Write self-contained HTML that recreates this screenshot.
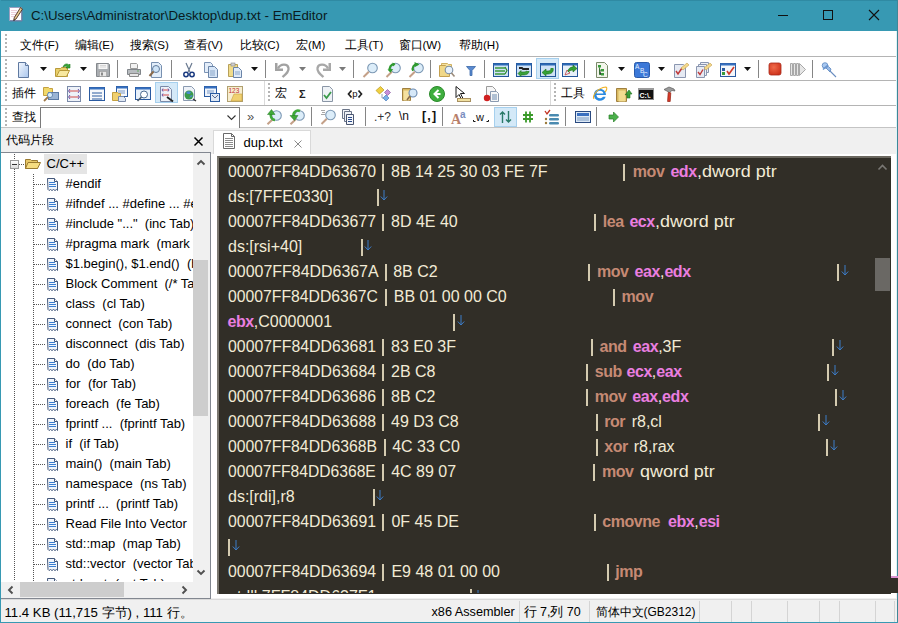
<!DOCTYPE html><html><head><meta charset="utf-8"><style>
*{margin:0;padding:0;box-sizing:border-box}
html,body{width:898px;height:623px;overflow:hidden;background:#f0f0f0;font-family:"Liberation Sans",sans-serif;color:#000}
.a{position:absolute}
.t{position:absolute;white-space:pre;line-height:1}
svg{position:absolute;overflow:visible}
.e{position:absolute;white-space:pre;line-height:1;font-size:16px;color:#f2ebd6}
.m{font-weight:bold;color:#c68a74;letter-spacing:-0.45px}
.r{font-weight:bold;color:#ea7ee0;letter-spacing:-0.45px}
.p{color:#cdb88e}
.w{color:#3f8fe8}
.tr{position:absolute;white-space:pre;line-height:1;font-size:13px;color:#000}
</style></head><body>
<div class="a" style="left:0px;top:0px;width:898px;height:31px;background:#3799b3;"></div>
<div class="a" style="left:0px;top:0px;width:898px;height:1px;background:#2f8aa3;"></div>
<svg style="left:8px;top:6px" width="16" height="16" viewBox="0 0 16 16"><path d="M1.5 1.5h12v13h-12z" fill="#fdfdff" stroke="#9aa0c0"/><path d="M14 3v12h-12" fill="none" stroke="#6a7aa0" stroke-width="1"/><path d="M3 4.5h6M3 6.5h6M3 8.5h5M3 10.5h4" stroke="#e0b0c0" stroke-width="0.6"/><path d="M12.5 1.5l2 1.5-6.5 10-2.2 1.2.4-2.4z" fill="#e8c890" stroke="#4a3020" stroke-width="0.9"/><path d="M6 13.5l-.6 1.4 1.3-.7z" fill="#000"/></svg>
<div class="t" style="left:31px;top:9px;font-size:13.3px;color:#0a1a20;">C:\Users\Administrator\Desktop\dup.txt - EmEditor</div>
<div class="a" style="left:778px;top:15px;width:10px;height:1px;background:#111;"></div>
<div class="a" style="left:823px;top:10px;width:10px;height:10px;background:transparent;border:1px solid #111"></div>
<svg style="left:869px;top:10px" width="10" height="10" viewBox="0 0 10 10"><path d="M0 0L10 10M10 0L0 10" stroke="#111" stroke-width="1.1"/></svg>
<div class="a" style="left:1px;top:31px;width:895px;height:97px;background:#ffffff;"></div>
<div class="t" style="left:20px;top:39px;font-size:11.6px;color:#000;">文件(F)</div>
<div class="t" style="left:74.5px;top:39px;font-size:11.6px;color:#000;">编辑(E)</div>
<div class="t" style="left:129.5px;top:39px;font-size:11.6px;color:#000;">搜索(S)</div>
<div class="t" style="left:183.5px;top:39px;font-size:11.6px;color:#000;">查看(V)</div>
<div class="t" style="left:239.5px;top:39px;font-size:11.6px;color:#000;">比较(C)</div>
<div class="t" style="left:296px;top:39px;font-size:11.6px;color:#000;">宏(M)</div>
<div class="t" style="left:344.5px;top:39px;font-size:11.6px;color:#000;">工具(T)</div>
<div class="t" style="left:398.5px;top:39px;font-size:11.6px;color:#000;">窗口(W)</div>
<div class="t" style="left:459px;top:39px;font-size:11.6px;color:#000;">帮助(H)</div>
<div class="a" style="left:1px;top:56px;width:896px;height:1px;background:#b4b4b4;"></div>
<div class="a" style="left:1px;top:80px;width:896px;height:1px;background:#b4b4b4;"></div>
<div class="a" style="left:1px;top:105px;width:896px;height:1px;background:#b4b4b4;"></div>
<div class="a" style="left:1px;top:127px;width:896px;height:1px;background:#c4c4c4;"></div>
<div class="a" style="left:5px;top:34px;width:2px;height:2px;background:#b4b4b4;"></div>
<div class="a" style="left:5px;top:38px;width:2px;height:2px;background:#b4b4b4;"></div>
<div class="a" style="left:5px;top:42px;width:2px;height:2px;background:#b4b4b4;"></div>
<div class="a" style="left:5px;top:46px;width:2px;height:2px;background:#b4b4b4;"></div>
<div class="a" style="left:5px;top:50px;width:2px;height:2px;background:#b4b4b4;"></div>
<div class="a" style="left:5px;top:59px;width:2px;height:2px;background:#b4b4b4;"></div>
<div class="a" style="left:5px;top:63px;width:2px;height:2px;background:#b4b4b4;"></div>
<div class="a" style="left:5px;top:67px;width:2px;height:2px;background:#b4b4b4;"></div>
<div class="a" style="left:5px;top:71px;width:2px;height:2px;background:#b4b4b4;"></div>
<div class="a" style="left:5px;top:75px;width:2px;height:2px;background:#b4b4b4;"></div>
<svg style="left:16px;top:62px" width="16" height="16" viewBox="0 0 16 16"><defs><linearGradient id="gn" x1="0" y1="0" x2="1" y2="1"><stop offset="0" stop-color="#f4f8fd"/><stop offset="1" stop-color="#a9c6ee"/></linearGradient></defs><path d="M2.5 0.5h7l3 3v12h-10z" fill="url(#gn)" stroke="#5f79a0"/><path d="M9.5 0.5v3h3" fill="#dce8f7" stroke="#5f79a0"/></svg>
<svg style="left:40px;top:67px" width="7" height="4" viewBox="0 0 7 4"><path d="M0 0h7l-3.5 4z" fill="#111"/></svg>
<svg style="left:55px;top:62px" width="16" height="16" viewBox="0 0 16 16"><path d="M0.5 6.5h5l1-1h6v9h-12z" fill="#e9cf6a" stroke="#b89a3a"/><path d="M1.5 14.5l3-6h10l-3 6z" fill="#f8e9a0" stroke="#b89a3a"/><path d="M8 5c1-3 4-4 6-2l1-1v4h-4l1.3-1.3c-1.5-1-3-0.5-4.3 0.3z" fill="#3aa63a" stroke="#1f7a1f" stroke-width="0.6"/></svg>
<svg style="left:80px;top:67px" width="7" height="4" viewBox="0 0 7 4"><path d="M0 0h7l-3.5 4z" fill="#111"/></svg>
<svg style="left:95px;top:62px" width="16" height="16" viewBox="0 0 16 16"><path d="M1.5 1.5h12l1 1v12h-13z" fill="#a9adb1" stroke="#85898d"/><rect x="3.5" y="2" width="9" height="5" fill="#f6f6f6"/><path d="M5 3.5h6M5 5h6" stroke="#c8c8c8" stroke-width="0.7"/><rect x="4.5" y="9.5" width="7" height="5" fill="#e8e8e8" stroke="#9a9a9a" stroke-width="0.6"/><rect x="6" y="10.5" width="2" height="3" fill="#8a8a8a"/></svg>
<div class="a" style="left:117px;top:60px;width:1px;height:18px;background:#858585;"></div>
<svg style="left:126px;top:62px" width="16" height="16" viewBox="0 0 16 16"><path d="M4.5 1.5h6l1 1v4h-7z" fill="#f2f2f2" stroke="#9a9a9a"/><path d="M1.5 7.5h13v5h-13z" fill="#b8bcc0" stroke="#80858a"/><path d="M3.5 11.5h9v3h-9z" fill="#e8e8e8" stroke="#8a8a8a"/><rect x="11" y="8.5" width="2" height="1" fill="#6a6"/></svg>
<svg style="left:148px;top:62px" width="16" height="16" viewBox="0 0 16 16"><path d="M3.5 0.5h7l3 3v12h-10z" fill="#e2edf9" stroke="#7890b0"/><circle cx="8" cy="7" r="3.5" fill="#cfe4f7" stroke="#607a9a"/><path d="M5.5 9.5l-4 4.5" stroke="#8a6a4a" stroke-width="2"/></svg>
<div class="a" style="left:171px;top:60px;width:1px;height:18px;background:#858585;"></div>
<svg style="left:181px;top:62px" width="16" height="16" viewBox="0 0 16 16"><path d="M5 1l4 9M11 1l-4 9" stroke="#6a7a90" stroke-width="1.2"/><circle cx="5" cy="12.5" r="2.2" fill="none" stroke="#1a3a80" stroke-width="1.5"/><circle cx="11" cy="12.5" r="2.2" fill="none" stroke="#1a3a80" stroke-width="1.5"/></svg>
<svg style="left:203px;top:62px" width="16" height="16" viewBox="0 0 16 16"><path d="M1.5 0.5h6l2 2v8h-8z" fill="#e3edf9" stroke="#7a92b4"/><path d="M5.5 4.5h6l3 3v8h-9z" fill="#d6e5f7" stroke="#6a84a8"/><path d="M7 9h5M7 11h5M7 13h5" stroke="#8aa6c8"/></svg>
<svg style="left:227px;top:62px" width="16" height="16" viewBox="0 0 16 16"><path d="M1.5 2.5h9v12h-9z" fill="#f1dc8a" stroke="#b7a05a"/><rect x="4" y="1" width="4" height="3" fill="#cfcfcf" stroke="#888" stroke-width="0.6"/><path d="M6.5 5.5h5l3 3v7h-8z" fill="#e0ebf8" stroke="#6a84a8"/><path d="M8 10h5M8 12h5" stroke="#8aa6c8"/></svg>
<svg style="left:251px;top:67px" width="7" height="4" viewBox="0 0 7 4"><path d="M0 0h7l-3.5 4z" fill="#111"/></svg>
<div class="a" style="left:265px;top:60px;width:1px;height:18px;background:#858585;"></div>
<svg style="left:274px;top:62px" width="16" height="16" viewBox="0 0 16 16"><path d="M4 6.5C6.5 1.5 13.5 1.5 14.5 6 15.2 9.5 12 12 8.5 15" fill="none" stroke="#a2a2a2" stroke-width="2.3"/><path d="M1 1h2.5v5.5H9V9H1z" fill="#a2a2a2"/></svg>
<svg style="left:299px;top:67px" width="7" height="4" viewBox="0 0 7 4"><path d="M0 0h7l-3.5 4z" fill="#7a7a7a"/></svg>
<svg style="left:316px;top:62px" width="16" height="16" viewBox="0 0 16 16"><path d="M12 6.5C9.5 1.5 2.5 1.5 1.5 6 .8 9.5 4 12 7.5 15" fill="none" stroke="#a8a8a8" stroke-width="2.3"/><path d="M15 1h-2.5v5.5H7V9h8z" fill="#a8a8a8"/></svg>
<svg style="left:339px;top:67px" width="7" height="4" viewBox="0 0 7 4"><path d="M0 0h7l-3.5 4z" fill="#7a7a7a"/></svg>
<div class="a" style="left:353px;top:60px;width:1px;height:18px;background:#858585;"></div>
<svg style="left:362px;top:62px" width="16" height="16" viewBox="0 0 16 16"><circle cx="10.5" cy="6" r="4.8" fill="#dcedf9" stroke="#7c98b4" stroke-width="1.1"/><path d="M6.8 9.8L1.5 15" stroke="#c4a088" stroke-width="2"/></svg>
<svg style="left:385px;top:62px" width="16" height="16" viewBox="0 0 16 16"><circle cx="10.5" cy="6" r="4.8" fill="#dcedf9" stroke="#7c98b4" stroke-width="1.1"/><path d="M6.8 9.8L1.5 15" stroke="#c4a088" stroke-width="2"/><path d="M9.5 2.2A4.5 4.5 0 0 0 5.2 8.8" fill="none" stroke="#2f9a2f" stroke-width="2.2"/><path d="M2.5 7.5l3 3.2 2.7-3.7z" fill="#2f9a2f"/><path d="M7.5 0.5l3 1.8-2.6 2.2z" fill="#2f9a2f"/></svg>
<svg style="left:408px;top:62px" width="16" height="16" viewBox="0 0 16 16"><circle cx="10.5" cy="6" r="4.8" fill="#dcedf9" stroke="#7c98b4" stroke-width="1.1"/><path d="M6.8 9.8L1.5 15" stroke="#c4a088" stroke-width="2"/><path d="M9.5 2.2A4.5 4.5 0 0 0 5.2 8.8" fill="none" stroke="#2f9a2f" stroke-width="2.2"/><path d="M6.5 0l5 2.5-4.5 2.5z" fill="#2f9a2f"/></svg>
<div class="a" style="left:430px;top:60px;width:1px;height:18px;background:#858585;"></div>
<svg style="left:439px;top:62px" width="16" height="16" viewBox="0 0 16 16"><path d="M2.5 1.5h6l1 1h3v9h-10z" fill="#f4e2a0" stroke="#d0b060"/><path d="M0.5 3.5h6l1 1h3v10h-10z" fill="#f0d888" stroke="#c4a050"/><circle cx="10" cy="8" r="3.8" fill="#e6f1fb" stroke="#7a8ea6" stroke-width="1.1"/><path d="M12.5 11l3 3.5" stroke="#9a8a7a" stroke-width="1.6"/></svg>
<svg style="left:463px;top:62px" width="16" height="16" viewBox="0 0 16 16"><path d="M3.5 4.5h9l-3.5 4v5h-2v-5z" fill="#5a8ad0" stroke="#3a68a8" stroke-width="0.8"/></svg>
<div class="a" style="left:484px;top:60px;width:1px;height:18px;background:#858585;"></div>
<svg style="left:493px;top:62px" width="16" height="16" viewBox="0 0 16 16"><rect x="0.5" y="1.5" width="15" height="13" fill="#cfe2f6" stroke="#22559a"/><rect x="0.5" y="1.5" width="15" height="2" fill="#2d6ab5"/><path d="M2 6h10M2 9h10M2 12h10" stroke="#3e9a3e" stroke-width="1.6"/><path d="M12 5l2 3.5-2 3.5" fill="none" stroke="#2a8a2a" stroke-width="1.2"/></svg>
<svg style="left:516px;top:62px" width="16" height="16" viewBox="0 0 16 16"><rect x="0.5" y="1.5" width="15" height="13" fill="#cfe2f6" stroke="#22559a"/><rect x="0.5" y="1.5" width="15" height="2" fill="#2d6ab5"/><path d="M3 6h3l1 1h6" stroke="#222" stroke-width="1.8"/><path d="M13 9c0 3-3 4-6 4l-2 0 0 1.5-3-3 3-3v1.5h2c2 0 3-.5 4-1" fill="#3aa03a" stroke="#1d701d" stroke-width="0.6"/></svg>
<div class="a" style="left:536px;top:58px;width:23px;height:21px;background:#d4e9f8;border:1px solid #a6d0ee"></div>
<svg style="left:540px;top:62px" width="16" height="16" viewBox="0 0 16 16"><rect x="0.5" y="1.5" width="15" height="13" fill="#cfe2f6" stroke="#22559a"/><rect x="0.5" y="1.5" width="15" height="2" fill="#2d6ab5"/><path d="M13 6c1 3-1 6-5 6h-2v2l-4-3.5 4-3.5v2h2c2 0 3-1 3-3" fill="#35a035" stroke="#1d701d" stroke-width="0.6"/></svg>
<svg style="left:562px;top:62px" width="16" height="16" viewBox="0 0 16 16"><rect x="0.5" y="1.5" width="15" height="13" fill="#e6eff9" stroke="#22559a"/><rect x="0.5" y="1.5" width="15" height="2" fill="#2d6ab5"/><path d="M3 13l2-5 3 3z" fill="none" stroke="#c04040" stroke-width="0.8"/><path d="M6 10c0-3 2-5 5-5v-2l4 3.5-4 3.5v-2c-2 0-3.5 1-5 2z" fill="#35a035" stroke="#1d701d" stroke-width="0.6"/></svg>
<div class="a" style="left:584px;top:60px;width:1px;height:18px;background:#858585;"></div>
<svg style="left:595px;top:62px" width="16" height="16" viewBox="0 0 16 16"><path d="M1.5 0.5h8l3 3v12h-11z" fill="#f2f5ea" stroke="#7a8a6a"/><rect x="3" y="3" width="3" height="2.5" fill="#3a9a3a"/><rect x="6" y="7" width="3" height="2.5" fill="#3a9a3a"/><rect x="6" y="11" width="3" height="2.5" fill="#3a9a3a"/><path d="M4.5 5.5v7h1.5M4.5 8.2h1.5" stroke="#2a6a2a" stroke-width="0.8"/></svg>
<svg style="left:618px;top:67px" width="7" height="4" viewBox="0 0 7 4"><path d="M0 0h7l-3.5 4z" fill="#111"/></svg>
<svg style="left:634px;top:62px" width="16" height="16" viewBox="0 0 16 16"><rect x="0.5" y="0.5" width="15" height="15" rx="2" fill="#3b78d8" stroke="#2a5aaa"/><text x="1" y="7" font-size="6.5" fill="#e8f0ff" font-family="Liberation Sans">A</text><text x="6" y="11" font-size="6.5" fill="#e8f0ff" font-family="Liberation Sans">B</text><text x="9" y="15" font-size="6.5" fill="#e8f0ff" font-family="Liberation Sans">C</text></svg>
<svg style="left:658px;top:67px" width="7" height="4" viewBox="0 0 7 4"><path d="M0 0h7l-3.5 4z" fill="#111"/></svg>
<svg style="left:673px;top:62px" width="16" height="16" viewBox="0 0 16 16"><path d="M1.5 2.5h9l2 2v11h-11z" fill="#e6eaf3" stroke="#8a96b0"/><path d="M3 9l2 3 4-6" fill="none" stroke="#c03a3a" stroke-width="1.5"/><path d="M8 6l6-5 2 2-6 5z" fill="#f4d98a" stroke="#c4a050" stroke-width="0.6"/></svg>
<svg style="left:696px;top:62px" width="16" height="16" viewBox="0 0 16 16"><path d="M4.5 0.5h8v10h-8z" fill="#eef0f6" stroke="#8a96b0"/><path d="M2.5 2.5h8v11h-8z" fill="#eef0f6" stroke="#8a96b0"/><path d="M0.5 4.5h8v11h-8z" fill="#e6eaf3" stroke="#8a96b0"/><path d="M2 10l2 2.5 3-5" fill="none" stroke="#c03a3a" stroke-width="1.4"/><path d="M8 6l6-5 2 2-6 5z" fill="#f4d98a" stroke="#c4a050" stroke-width="0.6"/></svg>
<svg style="left:720px;top:62px" width="16" height="16" viewBox="0 0 16 16"><rect x="0.5" y="1.5" width="15" height="13" fill="#f4f7fb" stroke="#2a5aa0"/><rect x="0.5" y="1.5" width="15" height="2" fill="#3670c0"/><rect x="2" y="6" width="3" height="3" fill="#2a5aa0"/><rect x="2" y="10" width="3" height="3" fill="#3a9a3a"/><path d="M7 9l2 3 5-7" fill="none" stroke="#d03a2a" stroke-width="1.6"/></svg>
<svg style="left:744px;top:67px" width="7" height="4" viewBox="0 0 7 4"><path d="M0 0h7l-3.5 4z" fill="#111"/></svg>
<div class="a" style="left:758px;top:60px;width:1px;height:18px;background:#858585;"></div>
<svg style="left:768px;top:62px" width="16" height="16" viewBox="0 0 16 16"><defs><radialGradient id="gs" cx="0.4" cy="0.35" r="0.8"><stop offset="0" stop-color="#f06a4a"/><stop offset="1" stop-color="#c82a14"/></radialGradient></defs><rect x="1" y="1" width="12" height="12" rx="2" fill="url(#gs)" stroke="#a8281a" stroke-width="0.8"/></svg>
<svg style="left:790px;top:62px" width="16" height="16" viewBox="0 0 16 16"><path d="M0.5 1.5h2v12h-2zM3.5 1.5h2v12h-2zM6.5 1.5h2v12h-2z" fill="#e6e6e6" stroke="#a8a8a8"/><path d="M9.5 1.5l6 6-6 6z" fill="#e6e6e6" stroke="#a8a8a8"/></svg>
<div class="a" style="left:812px;top:60px;width:1px;height:18px;background:#858585;"></div>
<svg style="left:821px;top:62px" width="16" height="16" viewBox="0 0 16 16"><circle cx="4" cy="3.5" r="2.8" fill="#a8c8f0" stroke="#5a86c0" stroke-width="0.8"/><path d="M4.5 5.5l3-1 2.5 2.5-1 3z" fill="#9abce8" stroke="#5a86c0" stroke-width="0.8"/><path d="M2 7.5l5-4.5" stroke="#6a96d0" stroke-width="1.6"/><path d="M8.5 8.5l6.5 6.5" stroke="#6a8ec0" stroke-width="1.1"/></svg>
<div class="a" style="left:5px;top:83px;width:2px;height:2px;background:#b4b4b4;"></div>
<div class="a" style="left:5px;top:87px;width:2px;height:2px;background:#b4b4b4;"></div>
<div class="a" style="left:5px;top:91px;width:2px;height:2px;background:#b4b4b4;"></div>
<div class="a" style="left:5px;top:95px;width:2px;height:2px;background:#b4b4b4;"></div>
<div class="a" style="left:5px;top:99px;width:2px;height:2px;background:#b4b4b4;"></div>
<div class="t" style="left:12px;top:87px;font-size:12px;color:#000;">插件</div>
<svg style="left:43px;top:86px" width="16" height="16" viewBox="0 0 16 16"><path d="M0.5 1.5h5l1 1h3v7h-9z" fill="#f0d86a" stroke="#c4a040"/><rect x="5.5" y="6.5" width="10" height="7" fill="#9ab4d4" stroke="#5a7aa4"/><circle cx="7" cy="9" r="2.6" fill="#d6ecfa" stroke="#6a8ab0"/><path d="M5 11l-4 4" stroke="#a07a4a" stroke-width="1.8"/></svg>
<svg style="left:67px;top:86px" width="16" height="16" viewBox="0 0 16 16"><rect x="0.5" y="0.5" width="13" height="15" fill="#eef2f8" stroke="#7a8aa8"/><path d="M2 5h10M2 11h10" stroke="#d04a4a" stroke-width="1.2"/><path d="M3 3l-1.5 2 1.5 2M11 3l1.5 2-1.5 2M3 9l-1.5 2 1.5 2M11 9l1.5 2-1.5 2" fill="none" stroke="#6a5ab0" stroke-width="1"/></svg>
<svg style="left:89px;top:86px" width="16" height="16" viewBox="0 0 16 16"><rect x="0.5" y="1.5" width="15" height="13" fill="#f6f8fb" stroke="#2a5aa0"/><rect x="0.5" y="1.5" width="15" height="2" fill="#3670c0"/><path d="M3 7h10M3 10h10M3 13h10" stroke="#2a5aa0" stroke-width="1.2"/></svg>
<svg style="left:112px;top:86px" width="16" height="16" viewBox="0 0 16 16"><rect x="4.5" y="0.5" width="11" height="10" fill="#f4f7fb" stroke="#2a5aa0"/><rect x="4.5" y="0.5" width="11" height="2" fill="#3670c0"/><path d="M6 5h7M6 7h7" stroke="#7a9ac8"/><path d="M0.5 6.5h5l1 1h2v7h-8z" fill="#f0d070" stroke="#c4a040"/><path d="M6.5 15.5l0-5h5l2 2v3z" fill="#dfe8f4" stroke="#7a8aa8"/></svg>
<svg style="left:135px;top:86px" width="16" height="16" viewBox="0 0 16 16"><rect x="0.5" y="1.5" width="15" height="12" fill="#e8f1fb" stroke="#2a5aa0"/><rect x="0.5" y="1.5" width="15" height="2" fill="#3670c0"/><circle cx="9" cy="8.5" r="3.5" fill="#fff" stroke="#4a6a90"/><path d="M6.5 11l-4 4" stroke="#4a5a6a" stroke-width="1.6"/></svg>
<div class="a" style="left:155px;top:82px;width:23px;height:21px;background:#d4e9f8;border:1px solid #a6d0ee"></div>
<svg style="left:159px;top:86px" width="16" height="16" viewBox="0 0 16 16"><path d="M1.5 0.5h8l3 3v12h-11z" fill="#eef2f8" stroke="#7a8aa8"/><path d="M3 4h7M3 9h7" stroke="#d04a4a" stroke-width="1.2"/><path d="M4 2.5l-1 1.5 1 1.5M9 2.5l1 1.5-1 1.5M4 7.5l-1 1.5 1 1.5" fill="none" stroke="#6a5ab0"/><path d="M8 11l6 4.5" stroke="#222" stroke-width="1.8"/></svg>
<svg style="left:182px;top:86px" width="16" height="16" viewBox="0 0 16 16"><path d="M1.5 0.5h8l3 3v11h-11z" fill="#eef2f8" stroke="#8a9ab0"/><circle cx="7" cy="9" r="4.5" fill="#3a9a4a"/><path d="M4 7c1-2 3-2 5-1l-1 2-2 0z M7 12l2-3 2 1z" fill="#4a8ad0"/><path d="M11 13l3 2" stroke="#333" stroke-width="1.3"/></svg>
<svg style="left:204px;top:86px" width="16" height="16" viewBox="0 0 16 16"><rect x="0.5" y="0.5" width="12" height="10" fill="#eef3fa" stroke="#2a5aa0"/><rect x="0.5" y="0.5" width="12" height="2" fill="#3670c0"/><path d="M3 5h7M3 7h7" stroke="#7a9ac8"/><rect x="6.5" y="7.5" width="9" height="8" fill="#dfe8f4" stroke="#2a5aa0"/><path d="M8 9l3 3 3-3" fill="none" stroke="#5a6a90"/></svg>
<svg style="left:227px;top:86px" width="16" height="16" viewBox="0 0 16 16"><rect x="0.5" y="0.5" width="15" height="15" fill="#f7eed0" stroke="#b0a070"/><text x="1.5" y="7" font-size="6.5" fill="#c03030" font-family="Liberation Sans">123</text><path d="M4 15l3-7 8 0 0 7z" fill="#f0d070" stroke="#c8a040" stroke-width="0.6"/></svg>
<div class="a" style="left:264px;top:81px;width:1px;height:24px;background:#dadada;"></div>
<div class="a" style="left:268px;top:83px;width:2px;height:2px;background:#b4b4b4;"></div>
<div class="a" style="left:268px;top:87px;width:2px;height:2px;background:#b4b4b4;"></div>
<div class="a" style="left:268px;top:91px;width:2px;height:2px;background:#b4b4b4;"></div>
<div class="a" style="left:268px;top:95px;width:2px;height:2px;background:#b4b4b4;"></div>
<div class="a" style="left:268px;top:99px;width:2px;height:2px;background:#b4b4b4;"></div>
<div class="t" style="left:275px;top:87px;font-size:12px;color:#000;">宏</div>
<svg style="left:296px;top:86px" width="16" height="16" viewBox="0 0 16 16"><text x="3" y="12" font-size="11" font-weight="bold" fill="#222" font-family="Liberation Sans">Σ</text></svg>
<svg style="left:322px;top:86px" width="16" height="16" viewBox="0 0 16 16"><path d="M0.5 0.5h7l3 3v12h-10z" fill="#eef2f6" stroke="#8a96a6"/><path d="M2 9l2.5 3 4.5-6" fill="none" stroke="#3a9a4a" stroke-width="1.8"/></svg>
<svg style="left:347px;top:86px" width="16" height="16" viewBox="0 0 16 16"><path d="M4.5 4.5L1.5 8l3 3.5M11.5 4.5l3 3.5-3 3.5" fill="none" stroke="#222" stroke-width="1.7"/><text x="5.3" y="11" font-size="9.5" fill="#111" font-family="Liberation Sans">p</text></svg>
<svg style="left:375px;top:86px" width="16" height="16" viewBox="0 0 16 16"><path d="M1 4.5l4.5-4 3.5 3.5-4.5 4z" fill="#f0d040" stroke="#b89a20" stroke-width="0.7"/><path d="M9.5 6.5l3-3 3 3-3 3z" fill="#c890d8" stroke="#8a5aa0" stroke-width="0.7"/><path d="M8 12l3-3 3 3-3 3z" fill="#7ab0e6" stroke="#4a80c0" stroke-width="0.7"/><path d="M7 8v4h1" fill="none" stroke="#7a8aa0" stroke-width="0.8"/></svg>
<svg style="left:402px;top:86px" width="16" height="16" viewBox="0 0 16 16"><path d="M0.5 2.5h8v12h-8z" fill="#d8b860" stroke="#a08040"/><path d="M1.5 4.5h6v10h-6z" fill="#f4e0a0"/><circle cx="11" cy="7" r="4" fill="#d6e8f8" stroke="#6a8ab0" stroke-width="1.1"/><path d="M8 10l-3 4" stroke="#8a6a4a" stroke-width="1.6"/></svg>
<svg style="left:429px;top:86px" width="16" height="16" viewBox="0 0 16 16"><circle cx="8" cy="8" r="7.5" fill="#3fae3f" stroke="#2a8a2a"/><path d="M9.5 4l-4 4 4 4" fill="none" stroke="#fff" stroke-width="2"/><path d="M5.5 8h6" stroke="#fff" stroke-width="2"/></svg>
<svg style="left:455px;top:86px" width="16" height="16" viewBox="0 0 16 16"><path d="M1 0.5v11l3-3 2.5 5 1.5-1-2.5-5h4z" fill="#fff" stroke="#000" stroke-width="0.9"/><rect x="2.5" y="12.5" width="13" height="3" fill="#f0e0a0" stroke="#a89060"/></svg>
<svg style="left:483px;top:86px" width="16" height="16" viewBox="0 0 16 16"><path d="M3.5 0.5h6l3 3v7h-9z" fill="#f6f6f6" stroke="#9a9a9a"/><path d="M7.5 5.5h6l2 2v8h-8z" fill="#f6f6f6" stroke="#8a9ab0"/><path d="M9 9h5M9 11h5M9 13h5" stroke="#6a8ab0"/><circle cx="4" cy="12" r="3.2" fill="#d02020"/></svg>
<div class="a" style="left:550px;top:81px;width:1px;height:24px;background:#dadada;"></div>
<div class="a" style="left:554px;top:83px;width:2px;height:2px;background:#b4b4b4;"></div>
<div class="a" style="left:554px;top:87px;width:2px;height:2px;background:#b4b4b4;"></div>
<div class="a" style="left:554px;top:91px;width:2px;height:2px;background:#b4b4b4;"></div>
<div class="a" style="left:554px;top:95px;width:2px;height:2px;background:#b4b4b4;"></div>
<div class="a" style="left:554px;top:99px;width:2px;height:2px;background:#b4b4b4;"></div>
<div class="t" style="left:561px;top:87px;font-size:12px;color:#000;">工具</div>
<svg style="left:592px;top:86px" width="16" height="16" viewBox="0 0 16 16"><path d="M8 3c3.5 0 6 2.4 6 6H4.5c0 2 1.5 3.3 3.5 3.3 1.4 0 2.4-.6 3-1.5h2.7c-.9 2.5-3.2 4-5.8 4-3.4 0-6-2.6-6-6s2.7-5.8 6.1-5.8zm-3.4 4.4h6.8c-.2-1.7-1.6-2.7-3.4-2.7s-3.2 1-3.4 2.7z" fill="#2a8ae0"/><path d="M2 13c-2-3 3-11 12-12 2 1 0 4-1 5" fill="none" stroke="#f0b020" stroke-width="1.1"/></svg>
<svg style="left:616px;top:86px" width="16" height="16" viewBox="0 0 16 16"><path d="M0.5 2.5h10v13h-10z" fill="#d8b860" stroke="#a08040"/><path d="M2.5 4.5h7v11h-7z" fill="#f2dc90"/><path d="M9 9l4-5 3 4h-2v4h-3v-4z" fill="#3aa03a" stroke="#1f701f" stroke-width="0.6"/></svg>
<svg style="left:638px;top:86px" width="16" height="16" viewBox="0 0 16 16"><rect x="0" y="2" width="16" height="12" fill="#111"/><rect x="0.5" y="2.5" width="15" height="11" fill="none" stroke="#8a8a8a"/><rect x="0" y="2" width="16" height="2" fill="#9a9a9a"/><text x="1.5" y="11.5" font-size="7" font-weight="bold" fill="#fff" font-family="Liberation Sans">C:\.</text></svg>
<svg style="left:661px;top:86px" width="16" height="16" viewBox="0 0 16 16"><path d="M3 3.5l5-2.5 5 2 1 2-3-.5-1.5 1-1 1z" fill="#9a9a9a" stroke="#5a5a5a" stroke-width="0.7"/><path d="M7.2 6.5l2.6 0.3-.6 8.7h-2.6z" fill="#d83a2a" stroke="#902010" stroke-width="0.7"/></svg>
<div class="a" style="left:5px;top:108px;width:2px;height:2px;background:#b4b4b4;"></div>
<div class="a" style="left:5px;top:112px;width:2px;height:2px;background:#b4b4b4;"></div>
<div class="a" style="left:5px;top:116px;width:2px;height:2px;background:#b4b4b4;"></div>
<div class="a" style="left:5px;top:120px;width:2px;height:2px;background:#b4b4b4;"></div>
<div class="a" style="left:5px;top:124px;width:2px;height:2px;background:#b4b4b4;"></div>
<div class="t" style="left:12px;top:111px;font-size:12px;color:#000;">查找</div>
<div class="a" style="left:40px;top:107px;width:200px;height:21px;background:#fff;border:1px solid #7a7a7a;border-bottom:none"></div>
<svg style="left:227px;top:115px" width="9" height="5" viewBox="0 0 9 5"><path d="M0.5 0.5l4 4 4-4" fill="none" stroke="#333" stroke-width="1.1"/></svg>
<div class="t" style="left:247px;top:110px;font-size:13px;color:#555;">»</div>
<svg style="left:266px;top:109px" width="16" height="16" viewBox="0 0 16 16"><circle cx="10.5" cy="6.5" r="4.8" fill="#dcedf9" stroke="#7c98b4" stroke-width="1.1"/><path d="M6.8 10.2L1.5 15.2" stroke="#c4a088" stroke-width="2"/><path d="M9 11A4.5 4.5 0 0 1 5.5 4" fill="none" stroke="#3ea838" stroke-width="2.6"/><path d="M1.5 5.5L5.5 0.5 9 5.5z" fill="#3ea838" stroke="#207a20" stroke-width="0.5"/></svg>
<svg style="left:289px;top:109px" width="16" height="16" viewBox="0 0 16 16"><circle cx="10.5" cy="6.5" r="4.8" fill="#dcedf9" stroke="#7c98b4" stroke-width="1.1"/><path d="M6.8 10.2L1.5 15.2" stroke="#c4a088" stroke-width="2"/><path d="M11 2A4.5 4.5 0 0 0 5 8" fill="none" stroke="#3ea838" stroke-width="2.6"/><path d="M1 6.5l4.5 5 3.5-5z" fill="#3ea838" stroke="#207a20" stroke-width="0.5"/></svg>
<div class="a" style="left:311px;top:107px;width:1px;height:19px;background:#858585;"></div>
<svg style="left:320px;top:109px" width="16" height="16" viewBox="0 0 16 16"><path d="M1 1.5h4M2 3.5h3M1 5.5h4" stroke="#a8a8a8" stroke-width="1"/><circle cx="10.5" cy="6" r="4.8" fill="#dcedf9" stroke="#7c98b4" stroke-width="1.1"/><path d="M6.8 9.8L1.5 15" stroke="#c4a088" stroke-width="2"/></svg>
<svg style="left:342px;top:109px" width="16" height="16" viewBox="0 0 16 16"><path d="M0.5 0.5h7v9h-7z" fill="#f2f4f8" stroke="#6a7488"/><path d="M2.5 2.5h7v10h-7z" fill="#eef1f6" stroke="#6a7488"/><path d="M4.5 5.5h7v10h-7z" fill="#f4f6fa" stroke="#4a5670"/><path d="M6 8.5h4M6 10.5h4M6 12.5h4" stroke="#2a4a88" stroke-width="1"/></svg>
<div class="a" style="left:365px;top:107px;width:1px;height:19px;background:#858585;"></div>
<div class="t" style="left:374px;top:111px;font-size:12px;color:#333;">.+?</div>
<div class="t" style="left:399px;top:110px;font-size:12px;color:#111;">\n</div>
<div class="t" style="left:422px;top:110px;font-size:12.5px;color:#111;font-weight:bold;letter-spacing:1.2px">[,]</div>
<div class="a" style="left:442px;top:107px;width:1px;height:19px;background:#858585;"></div>
<svg style="left:451px;top:109px" width="16" height="16" viewBox="0 0 16 16"><text x="0" y="15" font-size="14" fill="#b8806a" font-family="Liberation Serif" font-weight="bold">A</text><text x="9" y="9" font-size="10" fill="#7a8ec0" font-family="Liberation Sans" font-weight="bold">a</text></svg>
<svg style="left:473px;top:109px" width="16" height="16" viewBox="0 0 16 16"><text x="3" y="12" font-size="11" fill="#111" font-family="Liberation Sans">w</text><path d="M0.5 11v1.5h2M15.5 11v1.5h-2" fill="none" stroke="#111" stroke-width="1"/></svg>
<div class="a" style="left:494px;top:107px;width:23px;height:20px;background:#d4e9f8;border:1px solid #a6d0ee"></div>
<svg style="left:498px;top:109px" width="16" height="16" viewBox="0 0 16 16"><path d="M4.5 14V3M2 5.5L4.5 3 7 5.5M10.5 2v11M8 10.5l2.5 2.5 2.5-2.5" fill="none" stroke="#2a7a68" stroke-width="1.4"/></svg>
<svg style="left:520px;top:109px" width="16" height="16" viewBox="0 0 16 16"><path d="M6 2.5v11M10 2.5v11M3 6h10M3 10h10" stroke="#3a9a2a" stroke-width="1.8"/></svg>
<svg style="left:543px;top:109px" width="16" height="16" viewBox="0 0 16 16"><path d="M2 2l2 3 3-4" fill="none" stroke="#c03020" stroke-width="1.3"/><rect x="6" y="5" width="10" height="2.6" rx="1.3" fill="#4a8ab0"/><rect x="6" y="9" width="10" height="2.6" rx="1.3" fill="#4a8ab0"/><rect x="6" y="13" width="10" height="2.6" rx="1.3" fill="#4a8ab0"/><circle cx="3" cy="10" r="1.2" fill="#9a7a3a"/><circle cx="3" cy="14" r="1.2" fill="#9a7a3a"/></svg>
<div class="a" style="left:565px;top:107px;width:1px;height:19px;background:#858585;"></div>
<svg style="left:575px;top:109px" width="16" height="16" viewBox="0 0 16 16"><rect x="0.5" y="2.5" width="15" height="11" fill="#dde9f6" stroke="#2a4a80"/><rect x="2" y="4" width="12" height="3" fill="#3a70c0"/><path d="M2 9h12M2 11h12" stroke="#7a9ac0"/></svg>
<div class="a" style="left:596px;top:107px;width:1px;height:19px;background:#858585;"></div>
<svg style="left:607px;top:109px" width="16" height="16" viewBox="0 0 16 16"><path d="M2 6h4.5V3l5 5-5 5v-3H2z" fill="#4ab04a" stroke="#2a802a" stroke-width="0.7"/></svg>
<div class="a" style="left:1px;top:128px;width:210px;height:24px;background:#f0f0f0;"></div>
<div class="t" style="left:6px;top:134px;font-size:12px;color:#000;">代码片段</div>
<svg style="left:194px;top:137px" width="9" height="9" viewBox="0 0 9 9"><path d="M0.5 0.5l8 8M8.5 0.5l-8 8" stroke="#000" stroke-width="1.5"/></svg>
<div class="a" style="left:1px;top:152px;width:210px;height:447px;background:#fff;border-top:1px solid #828790;border-right:1px solid #828790;border-bottom:1px solid #828790"></div>
<div class="a" style="left:193px;top:153px;width:17px;height:429px;background:#f0f0f0;"></div>
<div class="a" style="left:193px;top:260px;width:15px;height:156px;background:#cdcdcd;"></div>
<svg style="left:197px;top:160px" width="8" height="5" viewBox="0 0 8 5"><path d="M0.5 4.5l3.5-3.5 3.5 3.5" fill="none" stroke="#505050" stroke-width="1.9"/></svg>
<svg style="left:197px;top:570px" width="8" height="5" viewBox="0 0 8 5"><path d="M0.5 0.5l3.5 3.5 3.5-3.5" fill="none" stroke="#505050" stroke-width="1.9"/></svg>
<div class="a" style="left:1px;top:582px;width:192px;height:16px;background:#f0f0f0;"></div>
<div class="a" style="left:20px;top:582px;width:104px;height:15px;background:#cdcdcd;"></div>
<div class="a" style="left:193px;top:582px;width:17px;height:16px;background:#f0f0f0;"></div>
<svg style="left:8px;top:586px" width="5" height="8" viewBox="0 0 5 8"><path d="M4.5 0.5l-3.5 3.5 3.5 3.5" fill="none" stroke="#505050" stroke-width="1.9"/></svg>
<svg style="left:182px;top:586px" width="5" height="8" viewBox="0 0 5 8"><path d="M0.5 0.5l3.5 3.5-3.5 3.5" fill="none" stroke="#505050" stroke-width="1.9"/></svg>
<div class="a" style="left:1px;top:153px;width:192px;height:428px;overflow:hidden">
<div class="a" style="left:13px;top:1px;width:1px;height:6px;background:repeating-linear-gradient(#555 0 1px,transparent 1px 2px)"></div>
<div class="a" style="left:13px;top:16px;width:1px;height:431px;background:repeating-linear-gradient(#555 0 1px,transparent 1px 2px)"></div>
<div class="a" style="left:18px;top:11px;width:6px;height:1px;background:repeating-linear-gradient(90deg,#555 0 1px,transparent 1px 2px)"></div>
<div class="a" style="left:9px;top:7px;width:9px;height:9px;border:1px solid #9a9a9a;background:linear-gradient(#fff,#dcdcdc)"></div>
<div class="a" style="left:11px;top:11px;width:5px;height:1px;background:#333"></div>
<svg style="left:24px;top:4px" width="16" height="13" viewBox="0 0 16 13"><path d="M0.5 2.5h5l1 1h6v8h-12z" fill="#e8c868" stroke="#9a7a30"/><path d="M0.5 11.5l2.5-6h12.5l-3 6z" fill="#f6dc80" stroke="#9a7a30"/></svg>
<div class="a" style="left:43px;top:1px;width:43px;height:20px;background:#e5e5e5"></div>
<div class="tr" style="left:45.5px;top:4px">C/C++</div>
<div class="a" style="left:32px;top:21px;width:1px;height:426px;background:repeating-linear-gradient(#555 0 1px,transparent 1px 2px)"></div>
<div class="a" style="left:33px;top:31px;width:11px;height:1px;background:repeating-linear-gradient(90deg,#555 0 1px,transparent 1px 2px)"></div>
<svg style="left:45px;top:25px" width="13" height="14" viewBox="0 0 13 14"><path d="M1.5 0.5h7l3 3v9l-1-1-1.5 1-1.5-1-1.5 1-1.5-1-1.5 1-1-1z" fill="#f2f6fc" stroke="#44587a"/><path d="M8.5 0.5v3h3" fill="#fff" stroke="#44587a"/><path d="M3 4.5h6M3 6.5h7M3 8.5h7" stroke="#3a7ed0" stroke-width="1"/></svg>
<div class="tr" style="left:64.5px;top:24px">#endif</div>
<div class="a" style="left:33px;top:51px;width:11px;height:1px;background:repeating-linear-gradient(90deg,#555 0 1px,transparent 1px 2px)"></div>
<svg style="left:45px;top:45px" width="13" height="14" viewBox="0 0 13 14"><path d="M1.5 0.5h7l3 3v9l-1-1-1.5 1-1.5-1-1.5 1-1.5-1-1.5 1-1-1z" fill="#f2f6fc" stroke="#44587a"/><path d="M8.5 0.5v3h3" fill="#fff" stroke="#44587a"/><path d="M3 4.5h6M3 6.5h7M3 8.5h7" stroke="#3a7ed0" stroke-width="1"/></svg>
<div class="tr" style="left:64.5px;top:44px">#ifndef ... #define ... #endif</div>
<div class="a" style="left:33px;top:71px;width:11px;height:1px;background:repeating-linear-gradient(90deg,#555 0 1px,transparent 1px 2px)"></div>
<svg style="left:45px;top:65px" width="13" height="14" viewBox="0 0 13 14"><path d="M1.5 0.5h7l3 3v9l-1-1-1.5 1-1.5-1-1.5 1-1.5-1-1.5 1-1-1z" fill="#f2f6fc" stroke="#44587a"/><path d="M8.5 0.5v3h3" fill="#fff" stroke="#44587a"/><path d="M3 4.5h6M3 6.5h7M3 8.5h7" stroke="#3a7ed0" stroke-width="1"/></svg>
<div class="tr" style="left:64.5px;top:64px">#include "..."  (inc Tab)</div>
<div class="a" style="left:33px;top:91px;width:11px;height:1px;background:repeating-linear-gradient(90deg,#555 0 1px,transparent 1px 2px)"></div>
<svg style="left:45px;top:85px" width="13" height="14" viewBox="0 0 13 14"><path d="M1.5 0.5h7l3 3v9l-1-1-1.5 1-1.5-1-1.5 1-1.5-1-1.5 1-1-1z" fill="#f2f6fc" stroke="#44587a"/><path d="M8.5 0.5v3h3" fill="#fff" stroke="#44587a"/><path d="M3 4.5h6M3 6.5h7M3 8.5h7" stroke="#3a7ed0" stroke-width="1"/></svg>
<div class="tr" style="left:64.5px;top:84px">#pragma mark  (mark Tab)</div>
<div class="a" style="left:33px;top:111px;width:11px;height:1px;background:repeating-linear-gradient(90deg,#555 0 1px,transparent 1px 2px)"></div>
<svg style="left:45px;top:105px" width="13" height="14" viewBox="0 0 13 14"><path d="M1.5 0.5h7l3 3v9l-1-1-1.5 1-1.5-1-1.5 1-1.5-1-1.5 1-1-1z" fill="#f2f6fc" stroke="#44587a"/><path d="M8.5 0.5v3h3" fill="#fff" stroke="#44587a"/><path d="M3 4.5h6M3 6.5h7M3 8.5h7" stroke="#3a7ed0" stroke-width="1"/></svg>
<div class="tr" style="left:64.5px;top:104px">$1.begin(), $1.end()  (be Tab)</div>
<div class="a" style="left:33px;top:131px;width:11px;height:1px;background:repeating-linear-gradient(90deg,#555 0 1px,transparent 1px 2px)"></div>
<svg style="left:45px;top:125px" width="13" height="14" viewBox="0 0 13 14"><path d="M1.5 0.5h7l3 3v9l-1-1-1.5 1-1.5-1-1.5 1-1.5-1-1.5 1-1-1z" fill="#f2f6fc" stroke="#44587a"/><path d="M8.5 0.5v3h3" fill="#fff" stroke="#44587a"/><path d="M3 4.5h6M3 6.5h7M3 8.5h7" stroke="#3a7ed0" stroke-width="1"/></svg>
<div class="tr" style="left:64.5px;top:124px">Block Comment  (/* Tab)</div>
<div class="a" style="left:33px;top:151px;width:11px;height:1px;background:repeating-linear-gradient(90deg,#555 0 1px,transparent 1px 2px)"></div>
<svg style="left:45px;top:145px" width="13" height="14" viewBox="0 0 13 14"><path d="M1.5 0.5h7l3 3v9l-1-1-1.5 1-1.5-1-1.5 1-1.5-1-1.5 1-1-1z" fill="#f2f6fc" stroke="#44587a"/><path d="M8.5 0.5v3h3" fill="#fff" stroke="#44587a"/><path d="M3 4.5h6M3 6.5h7M3 8.5h7" stroke="#3a7ed0" stroke-width="1"/></svg>
<div class="tr" style="left:64.5px;top:144px">class  (cl Tab)</div>
<div class="a" style="left:33px;top:171px;width:11px;height:1px;background:repeating-linear-gradient(90deg,#555 0 1px,transparent 1px 2px)"></div>
<svg style="left:45px;top:165px" width="13" height="14" viewBox="0 0 13 14"><path d="M1.5 0.5h7l3 3v9l-1-1-1.5 1-1.5-1-1.5 1-1.5-1-1.5 1-1-1z" fill="#f2f6fc" stroke="#44587a"/><path d="M8.5 0.5v3h3" fill="#fff" stroke="#44587a"/><path d="M3 4.5h6M3 6.5h7M3 8.5h7" stroke="#3a7ed0" stroke-width="1"/></svg>
<div class="tr" style="left:64.5px;top:164px">connect  (con Tab)</div>
<div class="a" style="left:33px;top:191px;width:11px;height:1px;background:repeating-linear-gradient(90deg,#555 0 1px,transparent 1px 2px)"></div>
<svg style="left:45px;top:185px" width="13" height="14" viewBox="0 0 13 14"><path d="M1.5 0.5h7l3 3v9l-1-1-1.5 1-1.5-1-1.5 1-1.5-1-1.5 1-1-1z" fill="#f2f6fc" stroke="#44587a"/><path d="M8.5 0.5v3h3" fill="#fff" stroke="#44587a"/><path d="M3 4.5h6M3 6.5h7M3 8.5h7" stroke="#3a7ed0" stroke-width="1"/></svg>
<div class="tr" style="left:64.5px;top:184px">disconnect  (dis Tab)</div>
<div class="a" style="left:33px;top:211px;width:11px;height:1px;background:repeating-linear-gradient(90deg,#555 0 1px,transparent 1px 2px)"></div>
<svg style="left:45px;top:205px" width="13" height="14" viewBox="0 0 13 14"><path d="M1.5 0.5h7l3 3v9l-1-1-1.5 1-1.5-1-1.5 1-1.5-1-1.5 1-1-1z" fill="#f2f6fc" stroke="#44587a"/><path d="M8.5 0.5v3h3" fill="#fff" stroke="#44587a"/><path d="M3 4.5h6M3 6.5h7M3 8.5h7" stroke="#3a7ed0" stroke-width="1"/></svg>
<div class="tr" style="left:64.5px;top:204px">do  (do Tab)</div>
<div class="a" style="left:33px;top:231px;width:11px;height:1px;background:repeating-linear-gradient(90deg,#555 0 1px,transparent 1px 2px)"></div>
<svg style="left:45px;top:225px" width="13" height="14" viewBox="0 0 13 14"><path d="M1.5 0.5h7l3 3v9l-1-1-1.5 1-1.5-1-1.5 1-1.5-1-1.5 1-1-1z" fill="#f2f6fc" stroke="#44587a"/><path d="M8.5 0.5v3h3" fill="#fff" stroke="#44587a"/><path d="M3 4.5h6M3 6.5h7M3 8.5h7" stroke="#3a7ed0" stroke-width="1"/></svg>
<div class="tr" style="left:64.5px;top:224px">for  (for Tab)</div>
<div class="a" style="left:33px;top:251px;width:11px;height:1px;background:repeating-linear-gradient(90deg,#555 0 1px,transparent 1px 2px)"></div>
<svg style="left:45px;top:245px" width="13" height="14" viewBox="0 0 13 14"><path d="M1.5 0.5h7l3 3v9l-1-1-1.5 1-1.5-1-1.5 1-1.5-1-1.5 1-1-1z" fill="#f2f6fc" stroke="#44587a"/><path d="M8.5 0.5v3h3" fill="#fff" stroke="#44587a"/><path d="M3 4.5h6M3 6.5h7M3 8.5h7" stroke="#3a7ed0" stroke-width="1"/></svg>
<div class="tr" style="left:64.5px;top:244px">foreach  (fe Tab)</div>
<div class="a" style="left:33px;top:271px;width:11px;height:1px;background:repeating-linear-gradient(90deg,#555 0 1px,transparent 1px 2px)"></div>
<svg style="left:45px;top:265px" width="13" height="14" viewBox="0 0 13 14"><path d="M1.5 0.5h7l3 3v9l-1-1-1.5 1-1.5-1-1.5 1-1.5-1-1.5 1-1-1z" fill="#f2f6fc" stroke="#44587a"/><path d="M8.5 0.5v3h3" fill="#fff" stroke="#44587a"/><path d="M3 4.5h6M3 6.5h7M3 8.5h7" stroke="#3a7ed0" stroke-width="1"/></svg>
<div class="tr" style="left:64.5px;top:264px">fprintf ...  (fprintf Tab)</div>
<div class="a" style="left:33px;top:291px;width:11px;height:1px;background:repeating-linear-gradient(90deg,#555 0 1px,transparent 1px 2px)"></div>
<svg style="left:45px;top:285px" width="13" height="14" viewBox="0 0 13 14"><path d="M1.5 0.5h7l3 3v9l-1-1-1.5 1-1.5-1-1.5 1-1.5-1-1.5 1-1-1z" fill="#f2f6fc" stroke="#44587a"/><path d="M8.5 0.5v3h3" fill="#fff" stroke="#44587a"/><path d="M3 4.5h6M3 6.5h7M3 8.5h7" stroke="#3a7ed0" stroke-width="1"/></svg>
<div class="tr" style="left:64.5px;top:284px">if  (if Tab)</div>
<div class="a" style="left:33px;top:311px;width:11px;height:1px;background:repeating-linear-gradient(90deg,#555 0 1px,transparent 1px 2px)"></div>
<svg style="left:45px;top:305px" width="13" height="14" viewBox="0 0 13 14"><path d="M1.5 0.5h7l3 3v9l-1-1-1.5 1-1.5-1-1.5 1-1.5-1-1.5 1-1-1z" fill="#f2f6fc" stroke="#44587a"/><path d="M8.5 0.5v3h3" fill="#fff" stroke="#44587a"/><path d="M3 4.5h6M3 6.5h7M3 8.5h7" stroke="#3a7ed0" stroke-width="1"/></svg>
<div class="tr" style="left:64.5px;top:304px">main()  (main Tab)</div>
<div class="a" style="left:33px;top:331px;width:11px;height:1px;background:repeating-linear-gradient(90deg,#555 0 1px,transparent 1px 2px)"></div>
<svg style="left:45px;top:325px" width="13" height="14" viewBox="0 0 13 14"><path d="M1.5 0.5h7l3 3v9l-1-1-1.5 1-1.5-1-1.5 1-1.5-1-1.5 1-1-1z" fill="#f2f6fc" stroke="#44587a"/><path d="M8.5 0.5v3h3" fill="#fff" stroke="#44587a"/><path d="M3 4.5h6M3 6.5h7M3 8.5h7" stroke="#3a7ed0" stroke-width="1"/></svg>
<div class="tr" style="left:64.5px;top:324px">namespace  (ns Tab)</div>
<div class="a" style="left:33px;top:351px;width:11px;height:1px;background:repeating-linear-gradient(90deg,#555 0 1px,transparent 1px 2px)"></div>
<svg style="left:45px;top:345px" width="13" height="14" viewBox="0 0 13 14"><path d="M1.5 0.5h7l3 3v9l-1-1-1.5 1-1.5-1-1.5 1-1.5-1-1.5 1-1-1z" fill="#f2f6fc" stroke="#44587a"/><path d="M8.5 0.5v3h3" fill="#fff" stroke="#44587a"/><path d="M3 4.5h6M3 6.5h7M3 8.5h7" stroke="#3a7ed0" stroke-width="1"/></svg>
<div class="tr" style="left:64.5px;top:344px">printf ...  (printf Tab)</div>
<div class="a" style="left:33px;top:371px;width:11px;height:1px;background:repeating-linear-gradient(90deg,#555 0 1px,transparent 1px 2px)"></div>
<svg style="left:45px;top:365px" width="13" height="14" viewBox="0 0 13 14"><path d="M1.5 0.5h7l3 3v9l-1-1-1.5 1-1.5-1-1.5 1-1.5-1-1.5 1-1-1z" fill="#f2f6fc" stroke="#44587a"/><path d="M8.5 0.5v3h3" fill="#fff" stroke="#44587a"/><path d="M3 4.5h6M3 6.5h7M3 8.5h7" stroke="#3a7ed0" stroke-width="1"/></svg>
<div class="tr" style="left:64.5px;top:364px">Read File Into Vector</div>
<div class="a" style="left:33px;top:391px;width:11px;height:1px;background:repeating-linear-gradient(90deg,#555 0 1px,transparent 1px 2px)"></div>
<svg style="left:45px;top:385px" width="13" height="14" viewBox="0 0 13 14"><path d="M1.5 0.5h7l3 3v9l-1-1-1.5 1-1.5-1-1.5 1-1.5-1-1.5 1-1-1z" fill="#f2f6fc" stroke="#44587a"/><path d="M8.5 0.5v3h3" fill="#fff" stroke="#44587a"/><path d="M3 4.5h6M3 6.5h7M3 8.5h7" stroke="#3a7ed0" stroke-width="1"/></svg>
<div class="tr" style="left:64.5px;top:384px">std::map  (map Tab)</div>
<div class="a" style="left:33px;top:411px;width:11px;height:1px;background:repeating-linear-gradient(90deg,#555 0 1px,transparent 1px 2px)"></div>
<svg style="left:45px;top:405px" width="13" height="14" viewBox="0 0 13 14"><path d="M1.5 0.5h7l3 3v9l-1-1-1.5 1-1.5-1-1.5 1-1.5-1-1.5 1-1-1z" fill="#f2f6fc" stroke="#44587a"/><path d="M8.5 0.5v3h3" fill="#fff" stroke="#44587a"/><path d="M3 4.5h6M3 6.5h7M3 8.5h7" stroke="#3a7ed0" stroke-width="1"/></svg>
<div class="tr" style="left:64.5px;top:404px">std::vector  (vector Tab)</div>
<div class="a" style="left:33px;top:431px;width:11px;height:1px;background:repeating-linear-gradient(90deg,#555 0 1px,transparent 1px 2px)"></div>
<svg style="left:45px;top:425px" width="13" height="14" viewBox="0 0 13 14"><path d="M1.5 0.5h7l3 3v9l-1-1-1.5 1-1.5-1-1.5 1-1.5-1-1.5 1-1-1z" fill="#f2f6fc" stroke="#44587a"/><path d="M8.5 0.5v3h3" fill="#fff" stroke="#44587a"/><path d="M3 4.5h6M3 6.5h7M3 8.5h7" stroke="#3a7ed0" stroke-width="1"/></svg>
<div class="tr" style="left:64.5px;top:424px">std::set  (set Tab)</div>
</div>
<div class="a" style="left:213px;top:130px;width:98px;height:24px;background:#fff;border:1px solid #d9d9d9;border-bottom:none"></div>
<svg style="left:223px;top:133px" width="12" height="16" viewBox="0 0 12 16"><path d="M0.5 0.5h8l3 3v12h-11z" fill="#fff" stroke="#6a6a6a"/><path d="M8.5 0.5v3h3" fill="none" stroke="#6a6a6a"/><path d="M2 5.5h8M2 7.5h8M2 9.5h8M2 11.5h8M2 13.5h8" stroke="#8c8c8c" stroke-width="1"/></svg>
<div class="tr" style="left:243.5px;top:136px">dup.txt</div>
<svg style="left:294px;top:140px" width="8" height="8" viewBox="0 0 8 8"><path d="M0.5 0.5l7 7M7.5 0.5l-7 7" stroke="#8a8a8a" stroke-width="1"/></svg>
<div class="a" style="left:211px;top:154px;width:685px;height:444px;background:#fff;"></div>
<div class="a" style="left:217px;top:156px;width:674px;height:438px;background:#312e27;border-left:2px solid #7a776f;border-top:2px solid #6a675f"></div>
<div class="a" style="left:875px;top:258px;width:15px;height:33px;background:#6a6864;"></div>
<svg style="left:878px;top:164px" width="9" height="6" viewBox="0 0 9 6"><path d="M0.5 5.5l4-4 4 4" fill="none" stroke="#7a7874" stroke-width="1.6"/></svg>
<div class="a" style="left:218px;top:157px;width:656px;height:436px;overflow:hidden">
<div class="e" style="left:10px;top:6.5px;transform:scaleX(0.9904);transform-origin:0 0;">00007FF84DD63670</div>
<div class="a" style="left:164px;top:7px;width:2px;height:17px;background:#d4cbb0"></div>
<div class="e" style="left:173px;top:6.5px;">8B 14 25 30 03 FE 7F</div>
<div class="a" style="left:405px;top:7px;width:2px;height:17px;background:#d4cbb0"></div>
<div class="e m" style="left:414.79999999999995px;top:6.5px;">mov</div>
<div class="e" style="left:452.4px;top:6.5px;"><span class="r">edx</span><span style="display:inline-block;transform:scaleX(1.12);transform-origin:0 0">,dword ptr</span></div>
<div class="e" style="left:10px;top:31.5px;">ds:[7FFE0330]</div>
<div class="a" style="left:159px;top:32px;width:2px;height:17px;background:#d4cbb0"></div>
<svg style="left:162px;top:33px" width="8" height="11" viewBox="0 0 8 11"><path d="M4 0v10M0.8 6.5L4 10l3.2-3.5" fill="none" stroke="#3d7cc8" stroke-width="1"/></svg>
<div class="e" style="left:10px;top:56.5px;transform:scaleX(0.9904);transform-origin:0 0;">00007FF84DD63677</div>
<div class="a" style="left:164px;top:57px;width:2px;height:17px;background:#d4cbb0"></div>
<div class="e" style="left:173px;top:56.5px;">8D 4E 40</div>
<div class="a" style="left:376px;top:57px;width:2px;height:17px;background:#d4cbb0"></div>
<div class="e m" style="left:384.79999999999995px;top:56.5px;">lea</div>
<div class="e" style="left:411.4px;top:56.5px;"><span class="r">ecx</span><span style="display:inline-block;transform:scaleX(1.12);transform-origin:0 0">,dword ptr</span></div>
<div class="e" style="left:10px;top:81.5px;">ds:[rsi+40]</div>
<div class="a" style="left:143px;top:82px;width:2px;height:17px;background:#d4cbb0"></div>
<svg style="left:146px;top:83px" width="8" height="11" viewBox="0 0 8 11"><path d="M4 0v10M0.8 6.5L4 10l3.2-3.5" fill="none" stroke="#3d7cc8" stroke-width="1"/></svg>
<div class="e" style="left:10px;top:106.5px;transform:scaleX(0.9959);transform-origin:0 0;">00007FF84DD6367A</div>
<div class="a" style="left:167px;top:107px;width:2px;height:17px;background:#d4cbb0"></div>
<div class="e" style="left:175.2px;top:106.5px;">8B C2</div>
<div class="a" style="left:370px;top:107px;width:2px;height:17px;background:#d4cbb0"></div>
<div class="e m" style="left:379px;top:106.5px;">mov</div>
<div class="e" style="left:416.6px;top:106.5px;"><span class="r">eax</span>,<span class="r">edx</span></div>
<div class="a" style="left:619px;top:107px;width:2px;height:17px;background:#d4cbb0"></div>
<svg style="left:623px;top:108px" width="8" height="11" viewBox="0 0 8 11"><path d="M4 0v10M0.8 6.5L4 10l3.2-3.5" fill="none" stroke="#3d7cc8" stroke-width="1"/></svg>
<div class="e" style="left:10px;top:131.5px;transform:scaleX(0.9849);transform-origin:0 0;">00007FF84DD6367C</div>
<div class="a" style="left:167px;top:132px;width:2px;height:17px;background:#d4cbb0"></div>
<div class="e" style="left:175.8px;top:131.5px;">BB 01 00 00 C0</div>
<div class="a" style="left:395px;top:132px;width:2px;height:17px;background:#d4cbb0"></div>
<div class="e m" style="left:403.6px;top:131.5px;">mov</div>
<div class="e" style="left:9.5px;top:156.5px;"><span class="r">ebx</span>,C0000001</div>
<div class="a" style="left:235px;top:157px;width:2px;height:17px;background:#d4cbb0"></div>
<svg style="left:239px;top:158px" width="8" height="11" viewBox="0 0 8 11"><path d="M4 0v10M0.8 6.5L4 10l3.2-3.5" fill="none" stroke="#3d7cc8" stroke-width="1"/></svg>
<div class="e" style="left:10px;top:181.5px;transform:scaleX(0.9904);transform-origin:0 0;">00007FF84DD63681</div>
<div class="a" style="left:164px;top:182px;width:2px;height:17px;background:#d4cbb0"></div>
<div class="e" style="left:173px;top:181.5px;">83 E0 3F</div>
<div class="a" style="left:373px;top:182px;width:2px;height:17px;background:#d4cbb0"></div>
<div class="e m" style="left:381.6px;top:181.5px;">and</div>
<div class="e" style="left:414.79999999999995px;top:181.5px;"><span class="r">eax</span>,3F</div>
<div class="a" style="left:614px;top:182px;width:2px;height:17px;background:#d4cbb0"></div>
<svg style="left:618px;top:183px" width="8" height="11" viewBox="0 0 8 11"><path d="M4 0v10M0.8 6.5L4 10l3.2-3.5" fill="none" stroke="#3d7cc8" stroke-width="1"/></svg>
<div class="e" style="left:10px;top:206.5px;transform:scaleX(0.9904);transform-origin:0 0;">00007FF84DD63684</div>
<div class="a" style="left:164px;top:207px;width:2px;height:17px;background:#d4cbb0"></div>
<div class="e" style="left:173px;top:206.5px;">2B C8</div>
<div class="a" style="left:368px;top:207px;width:2px;height:17px;background:#d4cbb0"></div>
<div class="e m" style="left:376.70000000000005px;top:206.5px;">sub</div>
<div class="e" style="left:408.5px;top:206.5px;"><span class="r">ecx</span>,<span class="r">eax</span></div>
<div class="a" style="left:609px;top:207px;width:2px;height:17px;background:#d4cbb0"></div>
<svg style="left:613px;top:208px" width="8" height="11" viewBox="0 0 8 11"><path d="M4 0v10M0.8 6.5L4 10l3.2-3.5" fill="none" stroke="#3d7cc8" stroke-width="1"/></svg>
<div class="e" style="left:10px;top:231.5px;transform:scaleX(0.9904);transform-origin:0 0;">00007FF84DD63686</div>
<div class="a" style="left:164px;top:232px;width:2px;height:17px;background:#d4cbb0"></div>
<div class="e" style="left:173px;top:231.5px;">8B C2</div>
<div class="a" style="left:368px;top:232px;width:2px;height:17px;background:#d4cbb0"></div>
<div class="e m" style="left:376.70000000000005px;top:231.5px;">mov</div>
<div class="e" style="left:414.29999999999995px;top:231.5px;"><span class="r">eax</span>,<span class="r">edx</span></div>
<div class="a" style="left:617px;top:232px;width:2px;height:17px;background:#d4cbb0"></div>
<svg style="left:621px;top:233px" width="8" height="11" viewBox="0 0 8 11"><path d="M4 0v10M0.8 6.5L4 10l3.2-3.5" fill="none" stroke="#3d7cc8" stroke-width="1"/></svg>
<div class="e" style="left:10px;top:256.5px;transform:scaleX(0.9904);transform-origin:0 0;">00007FF84DD63688</div>
<div class="a" style="left:164px;top:257px;width:2px;height:17px;background:#d4cbb0"></div>
<div class="e" style="left:173px;top:256.5px;">49 D3 C8</div>
<div class="a" style="left:378px;top:257px;width:2px;height:17px;background:#d4cbb0"></div>
<div class="e m" style="left:386.20000000000005px;top:256.5px;">ror</div>
<div class="e" style="left:413.70000000000005px;top:256.5px;">r8,cl</div>
<div class="a" style="left:600px;top:257px;width:2px;height:17px;background:#d4cbb0"></div>
<svg style="left:604px;top:258px" width="8" height="11" viewBox="0 0 8 11"><path d="M4 0v10M0.8 6.5L4 10l3.2-3.5" fill="none" stroke="#3d7cc8" stroke-width="1"/></svg>
<div class="e" style="left:10px;top:281.5px;transform:scaleX(0.9853);transform-origin:0 0;">00007FF84DD6368B</div>
<div class="a" style="left:166px;top:282px;width:2px;height:17px;background:#d4cbb0"></div>
<div class="e" style="left:174.2px;top:281.5px;">4C 33 C0</div>
<div class="a" style="left:378px;top:282px;width:2px;height:17px;background:#d4cbb0"></div>
<div class="e m" style="left:386.20000000000005px;top:281.5px;">xor</div>
<div class="e" style="left:415.70000000000005px;top:281.5px;">r8,rax</div>
<div class="a" style="left:608px;top:282px;width:2px;height:17px;background:#d4cbb0"></div>
<svg style="left:612px;top:283px" width="8" height="11" viewBox="0 0 8 11"><path d="M4 0v10M0.8 6.5L4 10l3.2-3.5" fill="none" stroke="#3d7cc8" stroke-width="1"/></svg>
<div class="e" style="left:10px;top:306.5px;transform:scaleX(0.9774);transform-origin:0 0;">00007FF84DD6368E</div>
<div class="a" style="left:164px;top:307px;width:2px;height:17px;background:#d4cbb0"></div>
<div class="e" style="left:173.2px;top:306.5px;">4C 89 07</div>
<div class="a" style="left:375px;top:307px;width:2px;height:17px;background:#d4cbb0"></div>
<div class="e m" style="left:383.9px;top:306.5px;">mov</div>
<div class="e" style="left:421.5px;top:306.5px;transform:scaleX(1.12);transform-origin:0 0;">qword ptr</div>
<div class="e" style="left:10px;top:331.5px;">ds:[rdi],r8</div>
<div class="a" style="left:155px;top:332px;width:2px;height:17px;background:#d4cbb0"></div>
<svg style="left:158px;top:333px" width="8" height="11" viewBox="0 0 8 11"><path d="M4 0v10M0.8 6.5L4 10l3.2-3.5" fill="none" stroke="#3d7cc8" stroke-width="1"/></svg>
<div class="e" style="left:10px;top:356.5px;transform:scaleX(0.9904);transform-origin:0 0;">00007FF84DD63691</div>
<div class="a" style="left:164px;top:357px;width:2px;height:17px;background:#d4cbb0"></div>
<div class="e" style="left:173.39999999999998px;top:356.5px;">0F 45 DE</div>
<div class="a" style="left:376px;top:357px;width:2px;height:17px;background:#d4cbb0"></div>
<div class="e m" style="left:384.29999999999995px;top:356.5px;">cmovne</div>
<div class="e" style="left:450px;top:356.5px;"><span class="r">ebx</span>,<span class="r">esi</span></div>
<div class="a" style="left:10px;top:382px;width:2px;height:17px;background:#d4cbb0"></div>
<svg style="left:14px;top:383px" width="8" height="11" viewBox="0 0 8 11"><path d="M4 0v10M0.8 6.5L4 10l3.2-3.5" fill="none" stroke="#3d7cc8" stroke-width="1"/></svg>
<div class="e" style="left:10px;top:406.5px;transform:scaleX(0.9904);transform-origin:0 0;">00007FF84DD63694</div>
<div class="a" style="left:164px;top:407px;width:2px;height:17px;background:#d4cbb0"></div>
<div class="e" style="left:173.39999999999998px;top:406.5px;">E9 48 01 00 00</div>
<div class="a" style="left:389px;top:407px;width:2px;height:17px;background:#d4cbb0"></div>
<div class="e m" style="left:397.20000000000005px;top:406.5px;">jmp</div>
<div class="e" style="left:10px;top:431.5px;">ntdll.7FF84DD637F1</div>
<div class="a" style="left:252px;top:432px;width:2px;height:17px;background:#d4cbb0"></div>
<svg style="left:256px;top:433px" width="8" height="11" viewBox="0 0 8 11"><path d="M4 0v10M0.8 6.5L4 10l3.2-3.5" fill="none" stroke="#3d7cc8" stroke-width="1"/></svg>
</div>
<div class="a" style="left:1px;top:599px;width:896px;height:23px;background:#f0f0f0;border-top:1px solid #dadada"></div>
<div class="t" style="left:4.5px;top:605.5px;font-size:13.2px;color:#000;">11.4 KB (11,715 字节) , 111 行。</div>
<div class="t" style="left:431.5px;top:606px;font-size:12.7px;color:#000;">x86 Assembler</div>
<div class="t" style="left:523.5px;top:606px;font-size:12.5px;color:#000;">行 7,列 70</div>
<div class="t" style="left:595.5px;top:606px;font-size:12px;color:#000;">简体中文(GB2312)</div>
<div class="a" style="left:519px;top:601px;width:1px;height:21px;background:#d4d4d4;"></div>
<div class="a" style="left:589px;top:601px;width:1px;height:21px;background:#d4d4d4;"></div>
<div class="a" style="left:699px;top:601px;width:1px;height:21px;background:#d4d4d4;"></div>
<div class="a" style="left:731px;top:601px;width:1px;height:21px;background:#d4d4d4;"></div>
<div class="a" style="left:751px;top:601px;width:1px;height:21px;background:#d4d4d4;"></div>
<div class="a" style="left:787px;top:601px;width:1px;height:21px;background:#d4d4d4;"></div>
<div class="a" style="left:819px;top:601px;width:1px;height:21px;background:#d4d4d4;"></div>
<div class="a" style="left:839px;top:601px;width:1px;height:21px;background:#d4d4d4;"></div>
<div class="a" style="left:875px;top:601px;width:1px;height:21px;background:#d4d4d4;"></div>
<div class="a" style="left:894px;top:601px;width:1px;height:21px;background:#d4d4d4;"></div>
<div class="a" style="left:0px;top:0px;width:1px;height:623px;background:#3799b3;"></div>
<div class="a" style="left:897px;top:0px;width:1px;height:623px;background:#3f8797;"></div>
<div class="a" style="left:896px;top:31px;width:1px;height:545px;background:#dff4f8;"></div>
<div class="a" style="left:890px;top:578px;width:8px;height:15px;background:#312e27;"></div>
<div class="a" style="left:891px;top:576px;width:7px;height:2px;background:#d890d0;"></div>
<div class="a" style="left:0px;top:622px;width:898px;height:1px;background:#3799b3;"></div>
</body></html>
